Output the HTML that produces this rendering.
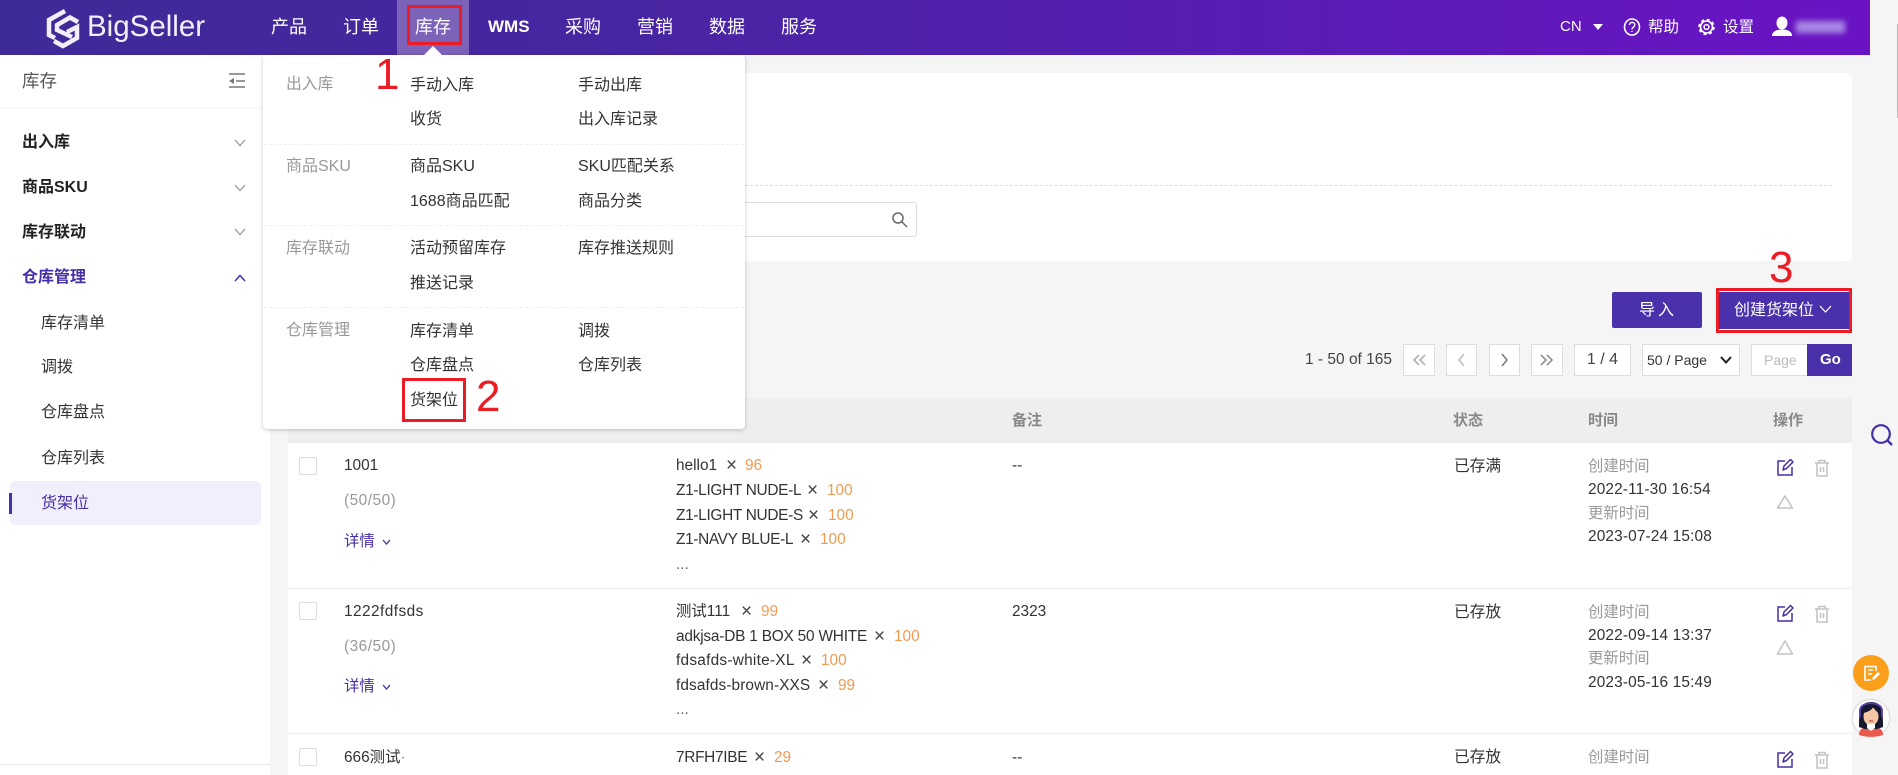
<!DOCTYPE html>
<html lang="zh"><head><meta charset="utf-8"><title>BigSeller</title>
<style>
*{box-sizing:border-box}
html,body{margin:0;padding:0;width:1898px;height:775px;overflow:hidden;background:#f5f5f5}
body{position:relative;font-family:"Liberation Sans","Noto Sans CJK SC",sans-serif;color:#333;font-size:15px}
.t{position:absolute;white-space:nowrap;line-height:20px;height:20px}
.b{position:absolute}
.nav{color:#fff;font-size:18px;top:17px}
.side{font-size:16px;color:#333}
.sb{font-weight:700;color:#222}
.lab{font-size:16px;color:#999}
.m{font-size:16px;color:#333}
.th{font-size:15px;font-weight:700;color:#888;top:411px}
.row{font-size:15.4px;color:#333}
.row.g{color:#999}
.row.o{color:#f09a52}
.row.x{color:#444;font-size:19px}
.pg{position:absolute;top:344px;height:32px;background:#fff;border:1px solid #ddd}
.red{position:absolute;border:3px solid #ec1c24;z-index:9}
.num{position:absolute;color:#ec1c24;font-size:44px;line-height:44px;z-index:9;font-family:"Liberation Sans",sans-serif}
</style></head><body>

<!-- header -->
<div class="b" style="left:0;top:0;width:1870px;height:55px;background:linear-gradient(90deg,#3e2a97 0%,#4a24a4 40%,#6a13c5 100%)"></div>
<div class="b" style="left:397px;top:0;width:72px;height:55px;background:#7c62b9"></div>
<div class="t" style="left:87px;top:12px;height:30px;line-height:30px;font-size:29.5px;color:#f2effa">BigSeller</div>
<div class="t nav" style="left:271px">产品</div>
<div class="t nav" style="left:343px">订单</div>
<div class="t nav" style="left:415px">库存</div>
<div class="t nav" style="left:488px;font-size:17px;font-weight:700">WMS</div>
<div class="t nav" style="left:565px">采购</div>
<div class="t nav" style="left:637px">营销</div>
<div class="t nav" style="left:709px">数据</div>
<div class="t nav" style="left:781px">服务</div>
<div class="t" style="left:1560px;top:17px;color:#fff;font-size:15px">CN</div>
<div class="t" style="left:1648px;top:18px;color:#fff;font-size:15.5px">帮助</div>
<div class="t" style="left:1723px;top:18px;color:#fff;font-size:15.5px">设置</div>
<div class="b" style="left:1796px;top:21px;width:49px;height:12px;background:#a788e2;filter:blur(3px)"></div>
<div class="b" style="left:1897px;top:24px;width:1px;height:94px;background:#bbb"></div>

<!-- sidebar -->
<div class="b" style="left:0;top:55px;width:270px;height:720px;background:#fff"></div>
<div class="b" style="left:0;top:108px;width:270px;height:1px;background:#f5f5f5"></div>
<div class="b" style="left:0;top:764px;width:270px;height:1px;background:#e8e8e8"></div>
<div class="t" style="left:22px;top:71px;font-size:17.5px;color:#555">库存</div>
<div class="t side sb" style="left:22px;top:133px">出入库</div>
<div class="t side sb" style="left:22px;top:178px">商品SKU</div>
<div class="t side sb" style="left:22px;top:223px">库存联动</div>
<div class="t side sb" style="left:22px;top:268px;color:#472fa8">仓库管理</div>
<div class="t side" style="left:41px;top:314px">库存清单</div>
<div class="t side" style="left:41px;top:358px">调拨</div>
<div class="t side" style="left:41px;top:403px">仓库盘点</div>
<div class="t side" style="left:41px;top:449px">仓库列表</div>
<div class="b" style="left:10px;top:481px;width:251px;height:44px;border-radius:5px;background:#f2effc"></div>
<div class="b" style="left:9px;top:493px;width:3px;height:21px;background:#472fa8"></div>
<div class="t side" style="left:41px;top:494px;color:#472fa8">货架位</div>

<!-- top card -->
<div class="b" style="left:288px;top:73px;width:1564px;height:188px;background:#fff;border-radius:5px"></div>
<div class="b" style="left:700px;top:185px;width:1132px;border-top:1px dashed #ddd"></div>
<div class="b" style="left:700px;top:202px;width:217px;height:35px;border:1px solid #ddd;border-radius:3px;background:#fff"></div>

<!-- actions -->
<div class="b" style="left:1612px;top:292px;width:90px;height:36px;background:#4a31ab;border-radius:2px"></div>
<div class="t" style="left:1639px;top:301px;color:#fff;font-size:16px;letter-spacing:3px">导入</div>
<div class="b" style="left:1717px;top:292px;width:134px;height:37px;background:#4a31ab"></div>
<div class="b" style="left:1719px;top:329px;width:130px;height:2px;background:#fff"></div>
<div class="t" style="left:1734px;top:301px;color:#fff;font-size:16px">创建货架位</div>

<!-- pagination -->
<div class="t" style="left:1305px;top:350px;font-size:15.5px;color:#444">1 - 50 of 165</div>
<div class="pg" style="left:1403px;width:32px"></div>
<div class="pg" style="left:1446px;width:31px"></div>
<div class="pg" style="left:1489px;width:31px"></div>
<div class="pg" style="left:1531px;width:32px"></div>
<div class="pg" style="left:1574px;width:57px"></div>
<div class="t" style="left:1574px;width:57px;top:350px;text-align:center;font-size:16px;color:#444">1 / 4</div>
<div class="pg" style="left:1642px;width:98px"></div>
<div class="t" style="left:1647px;top:350px;font-size:14px;color:#333">50 / Page</div>
<div class="pg" style="left:1751px;width:57px"></div>
<div class="t" style="left:1764px;top:350px;font-size:14px;color:#bbb">Page</div>
<div class="b" style="left:1807px;top:344px;width:45px;height:32px;background:#4a31ab"></div>
<div class="t" style="left:1820px;top:350px;font-size:15px;font-weight:700;color:#fff">Go</div>

<!-- table -->
<div class="b" style="left:288px;top:398px;width:1564px;height:45px;background:#eee"></div>
<div class="b" style="left:288px;top:443px;width:1564px;height:332px;background:#fff"></div>
<div class="b" style="left:288px;top:588px;width:1564px;height:1px;background:#eee"></div>
<div class="b" style="left:288px;top:733px;width:1564px;height:1px;background:#eee"></div>
<div class="t th" style="left:1012px">备注</div>
<div class="t th" style="left:1453px">状态</div>
<div class="t th" style="left:1588px">时间</div>
<div class="t th" style="left:1773px">操作</div>

<div class="b" style="left:299px;top:457px;width:18px;height:18px;border:1px solid #ddd;border-radius:2px;background:#fff"></div>
<div class="b" style="left:299px;top:602px;width:18px;height:18px;border:1px solid #ddd;border-radius:2px;background:#fff"></div>
<div class="b" style="left:299px;top:748px;width:18px;height:18px;border:1px solid #ddd;border-radius:2px;background:#fff"></div>

<div class="t row" style="left:344px;top:456px">1001</div>
<div class="t row g" style="left:344px;top:491px;letter-spacing:.5px">(50/50)</div>
<div class="t row" style="left:344px;top:532px;color:#472fa8">详情</div>

<div class="t row" style="left:676px;top:456px">hello1</div>
<div class="t row x" style="left:726px;top:456px">×</div>
<div class="t row o" style="left:745px;top:456px">96</div>
<div class="t row" style="left:676px;top:481px;letter-spacing:-.3px">Z1-LIGHT NUDE-L</div>
<div class="t row x" style="left:807px;top:481px">×</div>
<div class="t row o" style="left:827px;top:481px">100</div>
<div class="t row" style="left:676px;top:506px;letter-spacing:-.3px">Z1-LIGHT NUDE-S</div>
<div class="t row x" style="left:808px;top:506px">×</div>
<div class="t row o" style="left:828px;top:506px">100</div>
<div class="t row" style="left:676px;top:530px;letter-spacing:-.33px">Z1-NAVY BLUE-L</div>
<div class="t row x" style="left:800px;top:530px">×</div>
<div class="t row o" style="left:820px;top:530px">100</div>
<div class="t row" style="left:676px;top:555px;color:#666">...</div>
<div class="t row" style="left:1012px;top:456px">--</div>
<div class="t row" style="left:1454px;top:457px;font-size:15.7px">已存满</div>
<div class="t row g" style="left:1588px;top:457px">创建时间</div>
<div class="t row" style="left:1588px;top:480px;letter-spacing:.15px">2022-11-30 16:54</div>
<div class="t row g" style="left:1588px;top:504px">更新时间</div>
<div class="t row" style="left:1588px;top:527px;letter-spacing:.15px">2023-07-24 15:08</div>

<div class="t row" style="left:344px;top:602px;letter-spacing:.45px">1222fdfsds</div>
<div class="t row g" style="left:344px;top:637px;letter-spacing:.5px">(36/50)</div>
<div class="t row" style="left:344px;top:677px;color:#472fa8">详情</div>

<div class="t row" style="left:676px;top:602px">测试111</div>
<div class="t row x" style="left:741px;top:602px">×</div>
<div class="t row o" style="left:761px;top:602px">99</div>
<div class="t row" style="left:676px;top:627px;letter-spacing:-.2px">adkjsa-DB 1 BOX 50 WHITE</div>
<div class="t row x" style="left:874px;top:627px">×</div>
<div class="t row o" style="left:894px;top:627px">100</div>
<div class="t row" style="left:676px;top:651px;letter-spacing:.25px">fdsafds-white-XL</div>
<div class="t row x" style="left:801px;top:651px">×</div>
<div class="t row o" style="left:821px;top:651px">100</div>
<div class="t row" style="left:676px;top:676px;letter-spacing:.1px">fdsafds-brown-XXS</div>
<div class="t row x" style="left:818px;top:676px">×</div>
<div class="t row o" style="left:838px;top:676px">99</div>
<div class="t row" style="left:676px;top:700px;color:#666">...</div>
<div class="t row" style="left:1012px;top:602px">2323</div>
<div class="t row" style="left:1454px;top:603px;font-size:15.7px">已存放</div>
<div class="t row g" style="left:1588px;top:603px">创建时间</div>
<div class="t row" style="left:1588px;top:626px;letter-spacing:.15px">2022-09-14 13:37</div>
<div class="t row g" style="left:1588px;top:649px">更新时间</div>
<div class="t row" style="left:1588px;top:673px;letter-spacing:.15px">2023-05-16 15:49</div>

<div class="t row" style="left:344px;top:748px">666测试<span style="color:#888">·</span></div>
<div class="t row" style="left:676px;top:748px;letter-spacing:-.3px">7RFH7IBE</div>
<div class="t row x" style="left:754px;top:748px">×</div>
<div class="t row o" style="left:774px;top:748px">29</div>
<div class="t row" style="left:1012px;top:748px">--</div>
<div class="t row" style="left:1454px;top:748px;font-size:15.7px">已存放</div>
<div class="t row g" style="left:1588px;top:748px">创建时间</div>

<!-- dropdown -->
<div class="b" style="left:263px;top:55px;width:482px;height:374px;background:#fff;border-radius:4px;box-shadow:0 1px 4px rgba(0,0,0,.22)"></div>
<div class="b" style="left:264px;top:144px;width:480px;border-top:1px dashed #eee"></div>
<div class="b" style="left:264px;top:225px;width:480px;border-top:1px dashed #eee"></div>
<div class="b" style="left:264px;top:307px;width:480px;border-top:1px dashed #eee"></div>
<div class="t lab" style="left:286px;top:75px;font-size:15.8px">出入库</div>
<div class="t m" style="left:410px;top:76px">手动入库</div>
<div class="t m" style="left:578px;top:76px">手动出库</div>
<div class="t m" style="left:410px;top:110px">收货</div>
<div class="t m" style="left:578px;top:110px">出入库记录</div>
<div class="t lab" style="left:286px;top:157px">商品SKU</div>
<div class="t m" style="left:410px;top:157px">商品SKU</div>
<div class="t m" style="left:578px;top:157px">SKU匹配关系</div>
<div class="t m" style="left:410px;top:192px">1688商品匹配</div>
<div class="t m" style="left:578px;top:192px">商品分类</div>
<div class="t lab" style="left:286px;top:239px">库存联动</div>
<div class="t m" style="left:410px;top:239px">活动预留库存</div>
<div class="t m" style="left:578px;top:239px">库存推送规则</div>
<div class="t m" style="left:410px;top:274px">推送记录</div>
<div class="t lab" style="left:286px;top:321px">仓库管理</div>
<div class="t m" style="left:410px;top:322px">库存清单</div>
<div class="t m" style="left:578px;top:322px">调拨</div>
<div class="t m" style="left:410px;top:356px">仓库盘点</div>
<div class="t m" style="left:578px;top:356px">仓库列表</div>
<div class="t m" style="left:410px;top:391px">货架位</div>

<!-- annotations -->
<div class="red" style="left:407px;top:5px;width:55px;height:40px"></div>
<div class="red" style="left:402px;top:378px;width:64px;height:44px"></div>
<div class="red" style="left:1716px;top:288px;width:136px;height:45px"></div>
<div class="num" style="left:375px;top:53px">1</div>
<div class="num" style="left:476px;top:375px">2</div>
<div class="num" style="left:1769px;top:246px">3</div>

<!-- icons overlay -->
<svg class="b" style="left:0;top:0;z-index:8" width="1898" height="775" viewBox="0 0 1898 775" fill="none">
  <!-- logo -->
  <g stroke="#f2effa" stroke-width="4.500" stroke-linejoin="miter">
    <path d="M65 11L49 20V35L55 38"/>
    <path d="M78 22L70 17.500L57 25V30L72 37"/>
    <path d="M54 41L63 46L77 38V27L67 32"/>
  </g>
  <path d="M424 55L433 46L442 55Z" fill="#fff"/>
  <!-- header right -->
  <path d="M1593 24H1603L1598 30Z" fill="#fff"/>
  <ellipse cx="1632" cy="27" rx="7.500" ry="8" stroke="#fff" stroke-width="1.600"/>
  <path d="M1629.500 25C1629.500 21.500 1634.800 21.500 1634.800 25C1634.800 27 1632 27 1632 29.500M1632 31V32" stroke="#fff" stroke-width="1.400"/>
  <circle cx="1706.500" cy="27" r="6" stroke="#fff" stroke-width="1.600"/>
  <circle cx="1706.500" cy="27" r="7.400" stroke="#fff" stroke-width="1.800" stroke-dasharray="3 2.810"/>
  <circle cx="1706.500" cy="27" r="2.400" stroke="#fff" stroke-width="1.500"/>
  <ellipse cx="1782" cy="23" rx="5.500" ry="6.500" fill="#fff"/>
  <path d="M1772 36C1772 31 1777 29.500 1782 29.500C1787 29.500 1792 31 1792 36Z" fill="#fff"/>
  <!-- sidebar collapse -->
  <g stroke="#777" stroke-width="1.600">
    <path d="M229 74H245M236 81H245M229 87H245"/>
  </g>
  <path d="M229 81L234 78V84Z" fill="#777"/>
  <!-- sidebar chevrons -->
  <g stroke="#999" stroke-width="1.300">
    <path d="M235 140L240 145.500L245 140M235 185L240 190.500L245 185M235 229L240 234.500L245 229"/>
  </g>
  <path d="M235 281L240 275.500L245 281" stroke="#472fa8" stroke-width="1.500"/>
  <!-- search -->
  <circle cx="898" cy="218" r="5" stroke="#666" stroke-width="1.500"/>
  <path d="M902 222L907 227" stroke="#666" stroke-width="1.500"/>
  <!-- create chevron -->
  <path d="M1820 306L1825.500 312L1831 306" stroke="#fff" stroke-width="1.200"/>
  <!-- pagination -->
  <g stroke="#aaa" stroke-width="1.500">
    <path d="M1419 355L1414 360L1419 365M1425 355L1420 360L1425 365"/>
    <path d="M1464 354L1459 360L1464 366" stroke="#bbb"/>
    <path d="M1502 354L1507 360L1502 366" stroke="#777"/>
    <path d="M1541 355L1546 360L1541 365M1547 355L1552 360L1547 365" stroke="#888"/>
  </g>
  <path d="M1721 357L1726 362.500L1731 357" stroke="#222" stroke-width="2"/>
  <!-- details chevrons -->
  <path d="M383 540L386.500 544L390 540M383 685L386.500 689L390 685" stroke="#472fa8" stroke-width="1.300"/>
  <!-- row actions -->
  <g fill="none">
    <path d="M1785 461H1778V475H1792V467" stroke="#472fa8" stroke-width="1.500"/>
    <path d="M1783 470L1784 466L1790.500 459.500L1793 462L1786.500 468.500Z" stroke="#472fa8" stroke-width="1.500" stroke-linejoin="round"/>
    <path d="M1815 463H1829M1819 463V460.500H1825V463M1817 463V476H1827V463M1820.500 467V472M1823.500 467V472" stroke="#c4c4c4" stroke-width="1.600"/>
    <path d="M1785 496L1792.500 508H1777.500Z" stroke="#c4c4c4" stroke-width="1.600" stroke-linejoin="round"/>
    <path d="M1785 607H1778V621H1792V613" stroke="#472fa8" stroke-width="1.500"/>
    <path d="M1783 616L1784 612L1790.500 605.500L1793 608L1786.500 614.500Z" stroke="#472fa8" stroke-width="1.500" stroke-linejoin="round"/>
    <path d="M1815 609H1829M1819 609V606.500H1825V609M1817 609V622H1827V609M1820.500 613V618M1823.500 613V618" stroke="#c4c4c4" stroke-width="1.600"/>
    <path d="M1785 641L1792.500 654H1777.500Z" stroke="#c4c4c4" stroke-width="1.600" stroke-linejoin="round"/>
    <path d="M1785 753H1778V767H1792V759" stroke="#472fa8" stroke-width="1.500"/>
    <path d="M1783 762L1784 758L1790.500 751.500L1793 754L1786.500 760.500Z" stroke="#472fa8" stroke-width="1.500" stroke-linejoin="round"/>
    <path d="M1815 755H1829M1819 755V752.500H1825V755M1817 755V768H1827V755M1820.500 759V764M1823.500 759V764" stroke="#c4c4c4" stroke-width="1.600"/>
  </g>
  <!-- right tools -->
  <circle cx="1881" cy="434" r="8.800" stroke="#472fa8" stroke-width="2.200"/>
  <path d="M1887.500 440.500L1892 445" stroke="#472fa8" stroke-width="2.400"/>
  <circle cx="1871" cy="673" r="18" fill="#fb9f1a"/>
  <path d="M1876 671V666.500H1865V680H1871M1868 670H1873M1868 674H1872" stroke="#fff" stroke-width="1.600"/>
  <path d="M1872 680L1873 677L1878 672L1880 674L1875 679Z" fill="#fff"/>
  <circle cx="1871" cy="718" r="18.500" stroke="#000" stroke-opacity=".08" stroke-width="2"/>
  <circle cx="1871" cy="718" r="18" fill="#fff"/>
  <path d="M1859 735C1859 728 1865 726.500 1871 726.500C1877 726.500 1883 728 1883 735C1875 737.500 1867 737.500 1859 735Z" fill="#ea5a4c"/>
  <path d="M1859 727C1859 711 1860 702 1871 702C1882 702 1883 711 1883 727L1877 729H1865Z" fill="#14192e"/>
  <ellipse cx="1871" cy="716.500" rx="7.500" ry="9" fill="#f6c7a4"/>
  <path d="M1863 713C1868 712 1872 710 1873 707C1875 710 1877 712 1879 713L1878 705L1865 704Z" fill="#14192e"/>
  <path d="M1867 728L1871 731L1875 728V724H1867Z" fill="#fff"/>
  <path d="M1860 717V710C1861 701 1881 701 1882 710V717" stroke="#5a3db0" stroke-width="1.800"/>
  <path d="M1869 721H1873" stroke="#d9443a" stroke-width="1.300"/>
</svg>
</body></html>
